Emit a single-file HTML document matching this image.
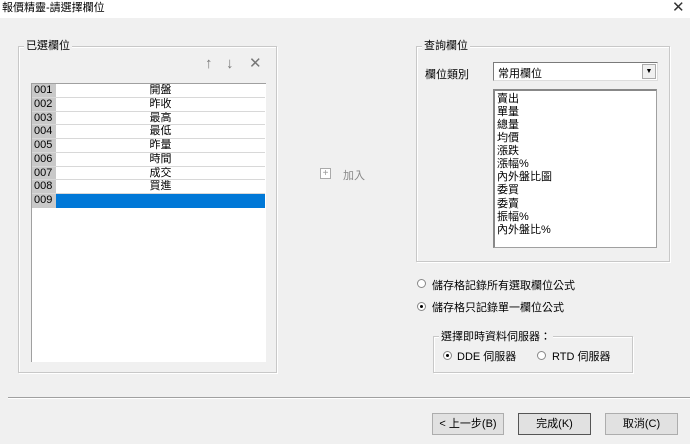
<!DOCTYPE html>
<html><head><meta charset="utf-8"><style>
*{margin:0;padding:0;box-sizing:border-box}
body{width:690px;height:444px;background:#f0f0f0;position:relative;overflow:hidden;font-family:"Liberation Sans","Noto Sans CJK TC",sans-serif;font-size:11px;color:#000}
.a{position:absolute;white-space:nowrap}
.gb{position:absolute;border:1px solid #c8c8c8;box-shadow:inset 1px 1px 0 #fff,1px 1px 0 #fff}
.gl{position:absolute;background:#f0f0f0;padding:0 2px;line-height:12px}
.row{position:absolute;left:0;width:233px;height:14px;border-bottom:1px solid #d8d8d8;background:#fff;overflow:hidden}
.row .n{position:absolute;left:0;top:0;width:24px;height:14px;background:#c9c9c9;padding-left:2px;line-height:13px;font-size:11px}
.row .t{position:absolute;left:24px;right:0;top:0;text-align:center;line-height:13px;height:13px}
.btn{position:absolute;height:22px;border:1px solid #adadad;background:#e1e1e1;text-align:center;line-height:20px}
.rad{position:absolute;width:9px;height:9px;border-radius:50%;border:1px solid #888;background:#fff}
.rad.on::after{content:"";position:absolute;left:2px;top:2px;width:3px;height:3px;border-radius:50%;background:#000}
.li{position:absolute;left:497px;height:13px;line-height:13px}
</style></head><body>
<div class="a" style="left:0;top:0;width:690px;height:18px;background:#fff"></div>
<div class="a" style="left:2px;top:1px;font-size:11px;line-height:14px">報價精靈-請選擇欄位</div>
<div class="a" style="left:672px;top:0px;font-size:15px;line-height:16px;color:#333">✕</div>

<div class="gb" style="left:18px;top:46px;width:259px;height:327px"></div>
<div class="gl" style="left:24px;top:40px">已選欄位</div>
<div class="a" style="left:205px;top:55px;font-size:15px;color:#777">↑</div>
<div class="a" style="left:226px;top:55px;font-size:15px;color:#777">↓</div>
<div class="a" style="left:249px;top:54px;font-size:15px;color:#777">✕</div>
<div class="a" style="left:31px;top:83px;width:235px;height:279px;background:#fff;border-top:1px solid #a0a0a0;border-left:1px solid #a0a0a0;overflow:hidden">
<div class="row" style="top:0px;height:14px"><div class="n">001</div><div class="t">開盤</div></div>
<div class="row" style="top:14px;height:14px"><div class="n">002</div><div class="t">昨收</div></div>
<div class="row" style="top:28px;height:13px"><div class="n">003</div><div class="t">最高</div></div>
<div class="row" style="top:41px;height:14px"><div class="n">004</div><div class="t">最低</div></div>
<div class="row" style="top:55px;height:14px"><div class="n">005</div><div class="t">昨量</div></div>
<div class="row" style="top:69px;height:14px"><div class="n">006</div><div class="t">時間</div></div>
<div class="row" style="top:83px;height:13px"><div class="n">007</div><div class="t">成交</div></div>
<div class="row" style="top:96px;height:14px"><div class="n">008</div><div class="t">買進</div></div>
<div class="row" style="top:110px;height:14px;background:#0078d7;border-bottom:none"><div class="n">009</div><div class="t"></div></div>
</div>

<div class="a" style="left:320px;top:168px;width:11px;height:11px;border:1px solid #aaa;background:#fff;color:#999;font-size:10px;line-height:9px;text-align:center">+</div>
<div class="a" style="left:343px;top:167px;color:#888;font-size:11px">加入</div>

<div class="gb" style="left:416px;top:46px;width:254px;height:216px"></div>
<div class="gl" style="left:422px;top:40px">查詢欄位</div>
<div class="a" style="left:425px;top:66px">欄位類別</div>
<div class="a" style="left:493px;top:62px;width:165px;height:19px;background:#fff;border:1px solid #7a7a7a;border-right-color:#ddd;border-bottom-color:#ddd"></div>
<div class="a" style="left:498px;top:65px">常用欄位</div>
<div class="a" style="left:642px;top:64px;width:14px;height:15px;background:#f0f0f0;border:1px solid #aaa;font-size:7px;text-align:center;line-height:13px">▼</div>
<div class="a" style="left:493px;top:89px;width:164px;height:159px;background:#fff;border:1px solid #a0a0a0;border-top:2px solid #888;border-left:2px solid #888"></div>
<div class="li" style="top:93px">賣出</div>
<div class="li" style="top:106px">單量</div>
<div class="li" style="top:119px">總量</div>
<div class="li" style="top:132px">均價</div>
<div class="li" style="top:145px">漲跌</div>
<div class="li" style="top:158px">漲幅%</div>
<div class="li" style="top:171px">內外盤比圖</div>
<div class="li" style="top:184px">委買</div>
<div class="li" style="top:198px">委賣</div>
<div class="li" style="top:211px">振幅%</div>
<div class="li" style="top:224px">內外盤比%</div>

<div class="rad" style="left:417px;top:279px"></div>
<div class="a" style="left:432px;top:277px">儲存格記錄所有選取欄位公式</div>
<div class="rad on" style="left:417px;top:302px"></div>
<div class="a" style="left:432px;top:299px">儲存格只記錄單一欄位公式</div>

<div class="gb" style="left:433px;top:336px;width:200px;height:37px"></div>
<div class="gl" style="left:439px;top:331px">選擇即時資料伺服器：</div>
<div class="rad on" style="left:443px;top:351px"></div>
<div class="a" style="left:457px;top:348px">DDE 伺服器</div>
<div class="rad" style="left:537px;top:351px"></div>
<div class="a" style="left:552px;top:348px">RTD 伺服器</div>

<div class="a" style="left:8px;top:397px;width:682px;height:1px;background:#a0a0a0;border-bottom:1px solid #fff;box-sizing:content-box"></div>

<div class="btn" style="left:432px;top:413px;width:72px">&lt; 上一步(B)</div>
<div class="btn" style="left:518px;top:413px;width:73px;border:1px solid #555">完成(K)</div>
<div class="btn" style="left:605px;top:413px;width:73px">取消(C)</div>
</body></html>
